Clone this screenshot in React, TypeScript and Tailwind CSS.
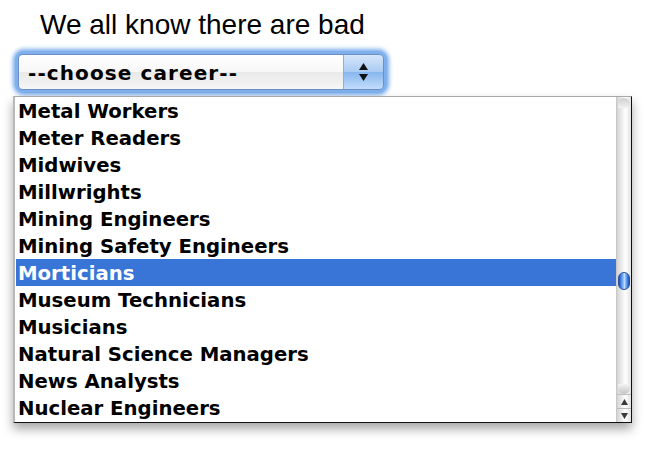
import React from 'react';

const careers = [
  'Metal Workers',
  'Meter Readers',
  'Midwives',
  'Millwrights',
  'Mining Engineers',
  'Mining Safety Engineers',
  'Morticians',
  'Museum Technicians',
  'Musicians',
  'Natural Science Managers',
  'News Analysts',
  'Nuclear Engineers',
];

const selected = 'Morticians';

const Scrollbar = () => (
  <div className="relative w-[15px] flex flex-col bg-[linear-gradient(to_right,#d4d4d4,#f4f4f4_45%,#ffffff_60%,#e2e2e2)] border-l border-[#c8c8c8]">
    {/* top cap */}
    <div className="h-[10px] rounded-t-full bg-[linear-gradient(to_bottom,#cfcfcf,#f2f2f2)] mt-[1px] mx-[1px]" />
    <div className="flex-1 relative">
      {/* thumb */}
      <div className="absolute left-[1px] right-[1px] top-[164px] h-[18px] rounded-full border border-[#2a4f9e] bg-[linear-gradient(to_right,#1e4fb5,#6fa8f5_35%,#b9dcff_55%,#4d8ae8_80%,#2050b8)]" />
    </div>
    <div className="h-[10px] rounded-b-full bg-[linear-gradient(to_top,#c4c4c4,#f4f4f4)] mx-[1px]" />
    <div className="h-[14px] border-t border-[#bdbdbd] flex items-center justify-center">
      <svg width="7" height="6" viewBox="0 0 7 6"><polygon points="3.5,0 7,6 0,6" fill="#3a3a3a" /></svg>
    </div>
    <div className="h-[14px] border-t border-[#bdbdbd] flex items-center justify-center">
      <svg width="7" height="6" viewBox="0 0 7 6"><polygon points="0,0 7,0 3.5,6" fill="#3a3a3a" /></svg>
    </div>
  </div>
);

export default function App() {
  return (
    <div className="w-[651px] h-[453px] bg-white overflow-hidden font-['Liberation_Sans',Arial,sans-serif]">
      <p className="pl-[40px] pt-[9px] text-[28px] leading-[32px] text-black">We all know there are bad</p>

      {/* select with focus ring */}
      <div className="ml-[15px] mt-[10px] w-[372px] h-[42px] rounded-[9px] p-[3px] bg-[#7fb0ec] shadow-[0_0_4px_2px_#78abec]">
        <div className="flex h-full rounded-[5px] border border-[#6a8fc4] overflow-hidden">
          <div className="flex-1 flex items-center pl-[9px] pt-[2px] bg-[linear-gradient(to_bottom,#ffffff,#f7f7f7_50%,#e9e9e9_51%,#f6f6f6)] font-['DejaVu_Sans',sans-serif] font-bold text-[20px] tracking-[1.1px] text-black">
            --choose career--
          </div>
          <div className="w-[40px] border-l border-[#8bb0e0] flex flex-col items-center justify-center gap-[4px] bg-[linear-gradient(to_bottom,#d6e6fa,#a9cbf3_50%,#88b7ef_51%,#c2dcfb)]">
            <svg width="9" height="7" viewBox="0 0 9 7"><polygon points="4.5,0 9,7 0,7" fill="#111" /></svg>
            <svg width="9" height="7" viewBox="0 0 9 7"><polygon points="0,0 9,0 4.5,7" fill="#111" /></svg>
          </div>
        </div>
      </div>

      {/* dropdown list */}
      <div className="ml-[13px] mt-[3px] w-[619px] h-[327px] flex border-t border-l-[2px] border-t-[#a8a8a8] border-l-[#b8b8b8] border-r border-b border-r-[#111] border-b-[#111] bg-white shadow-[0_6px_10px_rgba(0,0,0,0.35)]">
        <ul className="flex-1 pl-[1px] font-['DejaVu_Sans',sans-serif] font-bold text-[19.7px] leading-[30px]">
          {careers.map((c) => (
            <li
              key={c}
              className={c === selected ? 'h-[27px] pl-[2px] bg-[#3875d7] text-white' : 'h-[27px] pl-[2px] text-black'}
            >
              {c}
            </li>
          ))}
        </ul>
        <Scrollbar />
      </div>
    </div>
  );
}
